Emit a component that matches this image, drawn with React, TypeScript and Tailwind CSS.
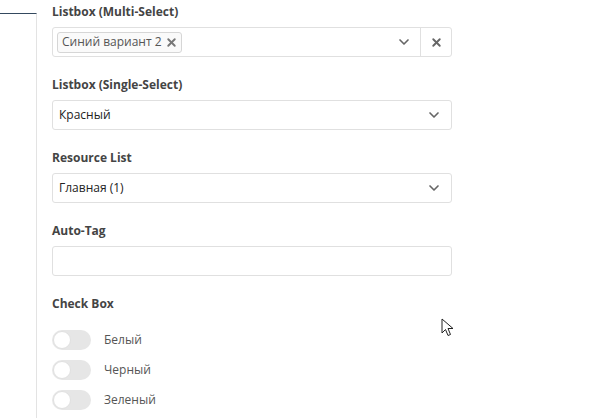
import { ChevronDown, X } from "lucide-react";

const font = { fontFamily: '"Open Sans", "Noto Sans", sans-serif' };

function Label({ children }: { children: string }) {
  return (
    <div className="h-[18px] text-[12px] leading-[18px] font-bold text-[#444]">
      {children}
    </div>
  );
}

function Select({ value }: { value: string }) {
  return (
    <div className="mt-[6px] flex h-[30px] w-[400px] items-center rounded-[3px] border border-[#e0e0e0] bg-white pr-[9px] pl-[6px]">
      <span className="flex-1 text-[12px] text-[#222]">{value}</span>
      <ChevronDown className="h-[16px] w-[16px] text-[#666]" strokeWidth={2.5} />
    </div>
  );
}

function Toggle({ label }: { label: string }) {
  return (
    <div className="flex h-[20px] items-center">
      <div className="flex h-[20px] w-[39px] items-center rounded-full bg-[#e6e6e6] px-[1px]">
        <div className="h-[18px] w-[18px] rounded-full border border-[#e0e0e0] bg-white" />
      </div>
      <span className="ml-[13px] text-[12px] text-[#555]">{label}</span>
    </div>
  );
}

export default function App() {
  return (
    <div className="relative flex h-[418px] w-[614px] overflow-hidden bg-white" style={font}>
      <div className="mt-[13px] w-[37px] border-t border-r border-t-[#34495e] border-r-[#e3e3e3]" />

      <div className="flex flex-col pt-[3px] pl-[15px]">
        <Label>Listbox (Multi-Select)</Label>
        <div className="mt-[6px] flex h-[30px] w-[400px] items-center rounded-[3px] border border-[#e0e0e0] bg-white">
          <div className="flex flex-1 items-center pl-[4px]">
            <span className="flex h-[21px] items-center gap-[3px] rounded-[3px] border border-[#d6d6d6] bg-[#fafafa] pr-[3px] pl-[4px] text-[12px] text-[#555]">
              Синий вариант 2
              <X className="h-[13px] w-[13px] text-[#777]" strokeWidth={3.5} />
            </span>
          </div>
          <ChevronDown className="mr-[8px] h-[16px] w-[16px] text-[#666]" strokeWidth={2.5} />
          <div className="flex h-full w-[31px] items-center justify-center border-l border-[#e0e0e0]">
            <X className="h-[13px] w-[13px] text-[#666]" strokeWidth={3.5} />
          </div>
        </div>

        <div className="mt-[19px]">
          <Label>Listbox (Single-Select)</Label>
          <Select value="Красный" />
        </div>

        <div className="mt-[19px]">
          <Label>Resource List</Label>
          <Select value="Главная (1)" />
        </div>

        <div className="mt-[19px]">
          <Label>Auto-Tag</Label>
          <div className="mt-[6px] h-[30px] w-[400px] rounded-[3px] border border-[#e0e0e0] bg-white" />
        </div>

        <div className="mt-[19px]">
          <Label>Check Box</Label>
          <div className="mt-[17px] flex flex-col gap-[10px]">
            <Toggle label="Белый" />
            <Toggle label="Черный" />
            <Toggle label="Зеленый" />
          </div>
        </div>
      </div>

      <svg
        className="absolute top-[318px] left-[441px]"
        width="14"
        height="20"
        viewBox="0 0 14 20"
      >
        <path
          d="M1 1 L1 15 L4.5 11.5 L7 17.5 L9.5 16.5 L7 10.5 L12 10.5 Z"
          fill="white"
          stroke="#222"
          strokeWidth="1"
          strokeLinejoin="round"
        />
      </svg>
    </div>
  );
}
